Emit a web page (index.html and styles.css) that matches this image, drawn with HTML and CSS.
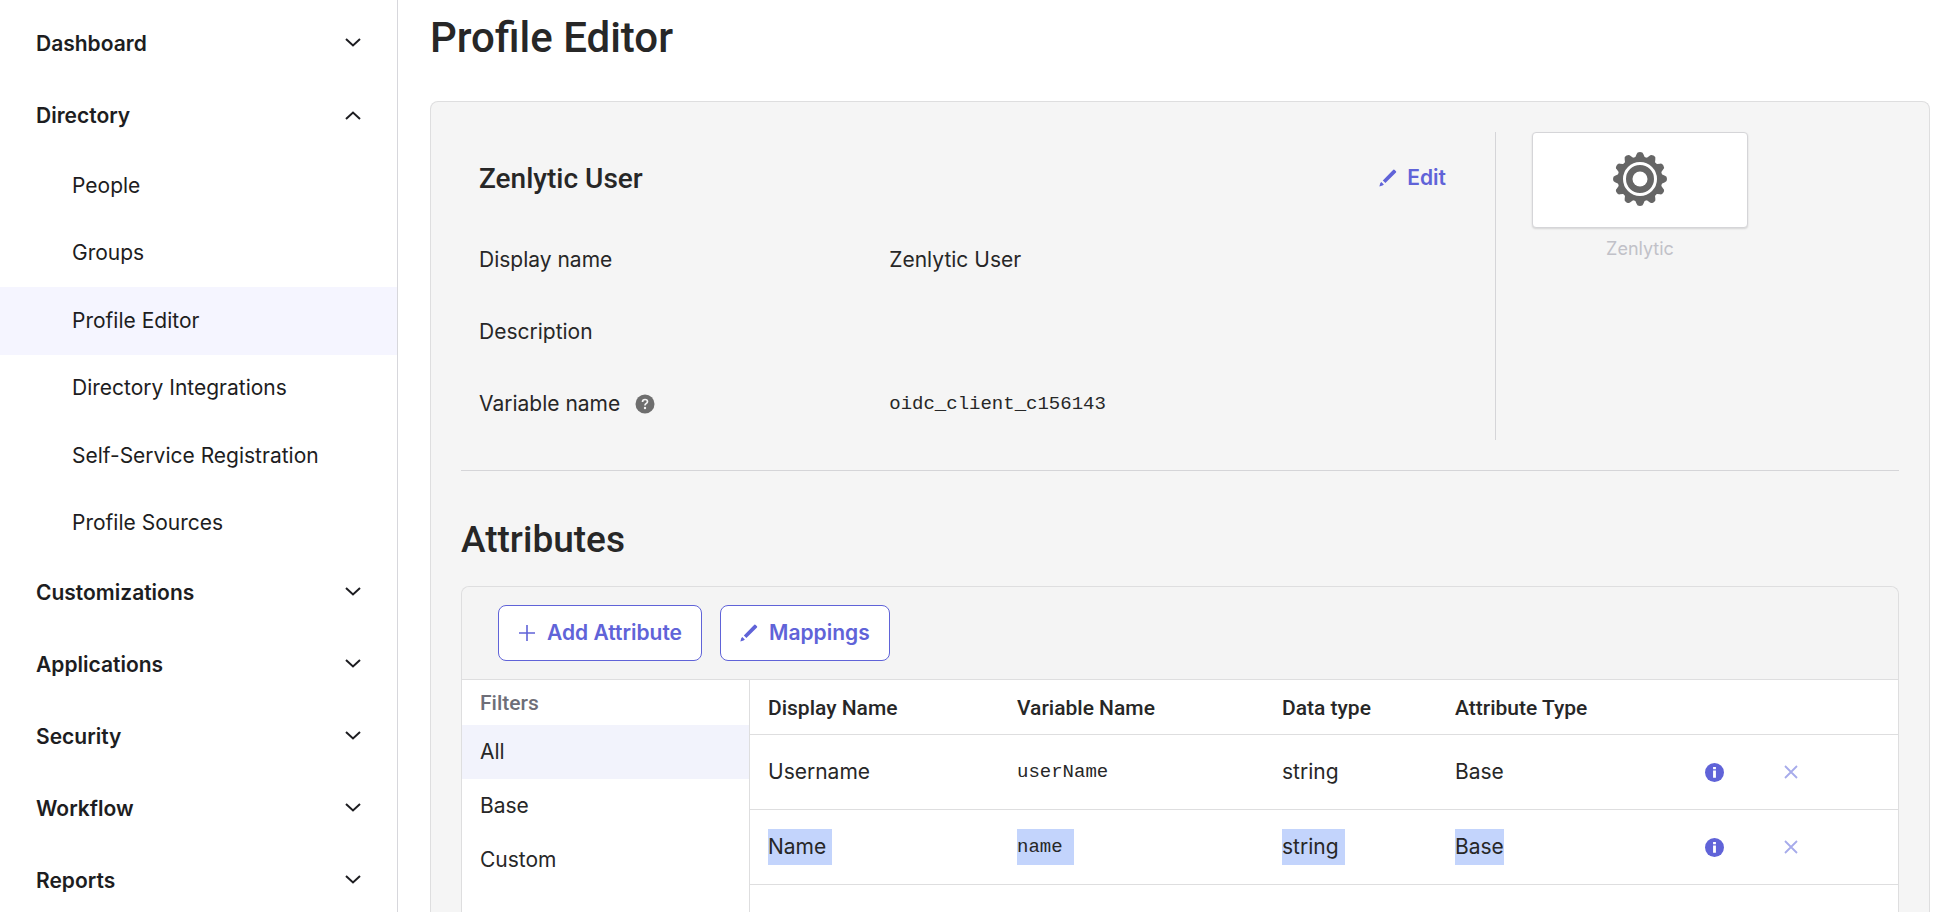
FILE: index.html
```html
<!DOCTYPE html>
<html lang="en">
<head>
<meta charset="utf-8">
<title>Profile Editor</title>
<link rel="stylesheet" href="styles.css">
</head>
<body>
<svg class="sprite" aria-hidden="true">
  <symbol id="chevron" viewBox="0 0 16 10"><path d="M1 1 8 7.500l7-6.500" fill="none" stroke="currentColor" stroke-width="2"/></symbol>
  <symbol id="pencil" viewBox="0 0 18 18"><path d="M14.300.800Q15 .300 15.700.900L17 2.200Q17.500 2.900 17 3.500L6.400 14 3.800 11.400Z M2.300 12.900 4.900 15.500 3.500 16.600.400 17.400 1.200 14.200Z" fill="currentColor"/></symbol>
  <symbol id="info" viewBox="0 0 20 20"><circle cx="10" cy="10" r="10" fill="currentColor"/><path d="M8.500 4.300h3V6.500h-3zM8.500 8h3v7.500h-3z" fill="#fff"/></symbol>
  <symbol id="cross" viewBox="0 0 14 14"><path d="M1 1 13 13M13 1 1 13" fill="none" stroke="currentColor" stroke-width="1.800"/></symbol>
</svg>
<div class="layout">
  <nav class="sidebar" aria-label="Main">
    <button class="section" type="button">Dashboard<svg class="chevron"><use href="#chevron"/></svg></button>
    <button class="section" type="button" aria-expanded="true">Directory<svg class="chevron chevron-up"><use href="#chevron"/></svg></button>
    <div class="subnav">
      <a href="#">People</a>
      <a href="#">Groups</a>
      <a href="#" class="current" aria-current="page">Profile Editor</a>
      <a href="#">Directory Integrations</a>
      <a href="#">Self-Service Registration</a>
      <a href="#">Profile Sources</a>
    </div>
    <button class="section" type="button">Customizations<svg class="chevron"><use href="#chevron"/></svg></button>
    <button class="section" type="button">Applications<svg class="chevron"><use href="#chevron"/></svg></button>
    <button class="section" type="button">Security<svg class="chevron"><use href="#chevron"/></svg></button>
    <button class="section" type="button">Workflow<svg class="chevron"><use href="#chevron"/></svg></button>
    <button class="section" type="button">Reports<svg class="chevron"><use href="#chevron"/></svg></button>
  </nav>
  <main class="main">
    <h1 class="page-title">Profile Editor</h1>
    <div class="panel">
      <section class="profile">
        <div class="details">
          <div class="details-head">
            <h2 class="profile-name">Zenlytic User</h2>
            <a class="edit" href="#"><svg class="pencil"><use href="#pencil"/></svg>Edit</a>
          </div>
          <dl class="fields">
            <dt>Display name</dt><dd>Zenlytic User</dd>
            <dt>Description</dt><dd></dd>
            <dt>Variable name
              <svg class="help" viewBox="0 0 20 20" role="img" aria-label="Help"><circle cx="10" cy="10" r="9.500" fill="currentColor"/><path d="M7.500 8q0-2.500 2.500-2.500T12.500 7.700q0 1-1.300 1.700T10 11.500" fill="none" stroke="#f4f4f4" stroke-width="1.700"/><circle cx="10" cy="14" r="1.200" fill="#f4f4f4"/></svg>
            </dt><dd class="mono">oidc_client_c156143</dd>
          </dl>
        </div>
        <div class="app">
          <div class="app-card">
            <svg class="gear" viewBox="-28 -28 56 56">
              <defs><path id="tooth" d="M-5.500-20-3.300-25Q-3-27 0-27T3.300-25L5.500-20Z"/></defs>
              <g fill="#666">
                <circle r="22.500"/>
                <use href="#tooth"/><use href="#tooth" transform="rotate(30)"/><use href="#tooth" transform="rotate(60)"/><use href="#tooth" transform="rotate(90)"/><use href="#tooth" transform="rotate(120)"/><use href="#tooth" transform="rotate(150)"/><use href="#tooth" transform="rotate(180)"/><use href="#tooth" transform="rotate(210)"/><use href="#tooth" transform="rotate(240)"/><use href="#tooth" transform="rotate(270)"/><use href="#tooth" transform="rotate(300)"/><use href="#tooth" transform="rotate(330)"/>
              </g>
              <circle r="15.500" fill="none" stroke="#fff" stroke-width="3"/>
              <circle r="7.500" fill="#fff"/>
            </svg>
          </div>
          <span class="app-name">Zenlytic</span>
        </div>
      </section>
      <h2 class="attributes-title">Attributes</h2>
      <section class="box">
        <div class="toolbar">
          <button class="btn" type="button"><svg class="plus" viewBox="0 0 18 18"><path d="M9 1v16M1 9h16" stroke="currentColor" stroke-width="1.600"/></svg>Add Attribute</button>
          <button class="btn" type="button"><svg class="pencil"><use href="#pencil"/></svg>Mappings</button>
        </div>
        <div class="box-body">
          <aside class="filters">
            <h3 class="filters-title">Filters</h3>
            <a class="filter filter-on" href="#">All</a>
            <a class="filter" href="#">Base</a>
            <a class="filter" href="#">Custom</a>
          </aside>
          <div class="grid">
            <table class="table">
              <colgroup><col class="c-display"><col class="c-variable"><col class="c-data"><col class="c-kind"><col class="c-actions"></colgroup>
              <thead>
                <tr><th>Display Name</th><th>Variable Name</th><th>Data type</th><th>Attribute Type</th><td></td></tr>
              </thead>
              <tbody>
                <tr>
                  <td>Username</td><td class="mono">userName</td><td>string</td><td>Base</td>
                  <td><div class="actions"><button class="icon-btn" type="button" aria-label="Info"><svg class="info"><use href="#info"/></svg></button><button class="icon-btn" type="button" aria-label="Remove" disabled><svg class="cross"><use href="#cross"/></svg></button></div></td>
                </tr>
                <tr>
                  <td><mark class="sel sel-space">Name</mark></td><td class="mono"><mark class="sel sel-wide">name</mark></td><td><mark class="sel sel-space">string</mark></td><td><mark class="sel">Base</mark></td>
                  <td><div class="actions"><button class="icon-btn" type="button" aria-label="Info"><svg class="info"><use href="#info"/></svg></button><button class="icon-btn" type="button" aria-label="Remove" disabled><svg class="cross"><use href="#cross"/></svg></button></div></td>
                </tr>
              </tbody>
            </table>
          </div>
        </div>
      </section>
    </div>
  </main>
</div>
</body>
</html>
```

FILE: styles.css
```css
* { box-sizing: border-box; }
body {
  margin: 0;
  background: #fff;
  color: #272727;
  font-family: Inter, "Liberation Sans", sans-serif;
  font-size: 21px;
  line-height: 36px;
}
h1, h2, h3, dl, dd { margin: 0; }
h1, h2, h3, th { font-family: Roboto, "Liberation Sans", sans-serif; font-weight: 500; }
a { color: inherit; text-decoration: none; }
button { font: inherit; cursor: pointer; }
svg { flex: none; }
.sprite { position: absolute; width: 0; height: 0; }
.layout { display: flex; min-height: 100vh; }

.sidebar {
  flex: none;
  width: 398px;
  padding-top: 8px;
  border-right: 1px solid #d7d7dc;
  color: #1d1d21;
}
.section {
  display: flex;
  align-items: center;
  justify-content: space-between;
  width: 100%;
  height: 72px;
  padding: 0 36px;
  border: 0;
  background: none;
  color: inherit;
  font-weight: 600;
  text-align: left;
}
.chevron { width: 16px; height: 10px; margin-bottom: 2px; }
.chevron-up { transform: rotate(180deg); }
.subnav { display: grid; grid-auto-rows: 1fr; min-height: 405px; }
.subnav a { display: flex; align-items: center; padding-left: 72px; }
.subnav .current { background: #f5f5ff; }

.main {
  display: flex;
  flex: 1;
  flex-direction: column;
  min-width: 0;
  padding: 14px 12px 0 32px;
}
.page-title { font-size: 42px; line-height: 48px; }
.panel {
  display: flex;
  flex: 1;
  flex-direction: column;
  margin-top: 39px;
  padding: 30px 30px 0;
  border: 1px solid #dededf;
  border-bottom: 0;
  border-radius: 8px 8px 0 0;
  background: #f5f5f5;
}
.profile {
  display: flex;
  padding-bottom: 30px;
  border-bottom: 1px solid #d5d5d8;
}
.details {
  flex: 1;
  min-height: 308px;
  padding: 18px 49px 18px 18px;
  border-right: 1px solid #d5d5d8;
}
.details-head {
  display: flex;
  align-items: center;
  justify-content: space-between;
  height: 56px;
}
.profile-name { padding-top: 2px; font-size: 28px; }
.edit { display: flex; align-items: center; gap: 10px; color: #6063d8; font-weight: 600; }
.pencil { width: 18px; height: 18px; }
.fields {
  display: grid;
  grid-template-columns: 42fr 57fr;
  grid-auto-rows: 36px;
  row-gap: 36px;
  padding-top: 36px;
}
.fields dt { display: flex; align-items: center; gap: 15px; }
.help { width: 20px; height: 20px; color: #6e6e6e; }
.mono { font-family: "Liberation Mono", monospace; font-size: 19px; }
.app {
  display: flex;
  flex-direction: column;
  align-items: center;
  margin: 0 151px 0 36px;
}
.app-card {
  display: flex;
  align-items: center;
  justify-content: center;
  width: 216px;
  height: 96px;
  padding-bottom: 2px;
  border: 1px solid #d5d5d8;
  border-radius: 4px;
  background: #fff;
  box-shadow: 0 1px 2px #0002;
}
.gear { width: 56px; height: 56px; }
.app-name { margin-top: 3px; color: #c1c1c8; font-size: 18px; }

.attributes-title { padding: 45px 0 22px; font-size: 37px; line-height: 48px; }
.box {
  display: flex;
  flex: 1;
  flex-direction: column;
  border: 1px solid #dededf;
  border-bottom: 0;
  border-radius: 8px 8px 0 0;
}
.toolbar {
  display: flex;
  gap: 18px;
  padding: 18px 36px;
  border-bottom: 1px solid #dededf;
  border-radius: 8px 8px 0 0;
  background: #f4f4f4;
}
.btn {
  display: flex;
  align-items: center;
  gap: 11px;
  height: 56px;
  padding: 0 19px;
  border: 1px solid #6063d8;
  border-radius: 8px;
  background: #fff;
  color: #6063d8;
  font-weight: 600;
}
.plus { width: 18px; height: 18px; }
.box-body { display: flex; flex: 1; background: #fff; }
.filters { width: 288px; flex: none; border-right: 1px solid #dededf; }
.filters-title { padding: 5px 18px 4px; color: #6e6e78; font-size: 21px; }
.filter { display: block; padding: 9px 18px; }
.filter-on { background: #f2f3fc; }
.grid { flex: 1; min-width: 0; }
.table { width: 100%; table-layout: fixed; border-collapse: collapse; }
.c-display { width: 249px; }
.c-variable { width: 265px; }
.c-data { width: 173px; }
.c-kind { width: 231px; }
.table th, .table td {
  padding: 19px 18px;
  border-bottom: 1px solid #dededf;
  text-align: left;
}
.table thead th, .table thead td { padding: 10px 18px 8px; }
.sel { display: inline-block; background: #c3d4fc; color: inherit; }
.sel-space { padding-right: 6px; }
.sel-wide { padding-right: 11px; }
.actions { display: flex; align-items: center; gap: 60px; padding-left: 19px; }
.icon-btn { display: flex; padding: 0; border: 0; background: none; color: #6063d8; }
.icon-btn:disabled { color: #a7abeb; cursor: default; }
.info { width: 19px; height: 19px; }
.cross { width: 14px; height: 14px; }
```
